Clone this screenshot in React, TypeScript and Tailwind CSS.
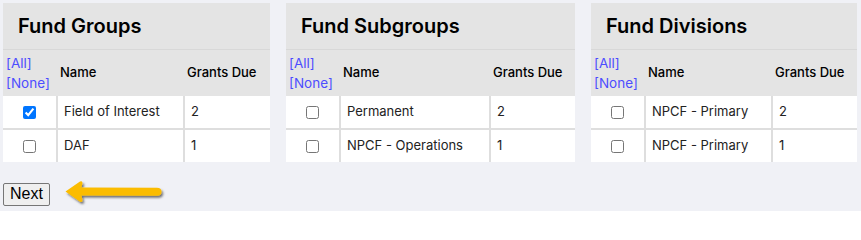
import React from 'react';

type Row = { name: string; due: number; checked?: boolean };

const panels: { title: string; widths: [number, number, number]; rows: Row[] }[] = [
  {
    title: 'Fund Groups',
    widths: [54, 127, 86],
    rows: [
      { name: 'Field of Interest', due: 2, checked: true },
      { name: 'DAF', due: 1 },
    ],
  },
  {
    title: 'Fund Subgroups',
    widths: [54, 150, 85],
    rows: [
      { name: 'Permanent', due: 2 },
      { name: 'NPCF - Operations', due: 1 },
    ],
  },
  {
    title: 'Fund Divisions',
    widths: [54, 127, 85],
    rows: [
      { name: 'NPCF - Primary', due: 2 },
      { name: 'NPCF - Primary', due: 1 },
    ],
  },
];

const Panel = ({ title, widths, rows }: (typeof panels)[number]) => (
  <div className="bg-white" style={{ width: widths[0] + widths[1] + widths[2] }}>
    <div className="h-[46px] bg-[#e4e4e4] pl-[15px] flex items-center">
      <h2 className="text-[20px] font-semibold text-black">{title}</h2>
    </div>
    <table className="w-full border-collapse table-fixed text-[13px] text-[#222]">
      <colgroup>
        {widths.map((w, i) => (
          <col key={i} style={{ width: w }} />
        ))}
      </colgroup>
      <thead>
        <tr className="h-[46px] bg-[#e4e4e4] border-t border-[#d8d8d8]">
          <th className="text-left font-normal pl-[3px] leading-[20px] text-[#4d4dff] text-[13.5px]">
            <div>[All]</div>
            <div>[None]</div>
          </th>
          <th className="text-left font-medium text-black pl-[3px]">Name</th>
          <th className="text-left font-medium text-black pl-[3px]">Grants Due</th>
        </tr>
      </thead>
      <tbody>
        {rows.map((r, i) => (
          <tr key={i} className={`h-[33px] ${i > 0 ? 'border-t-2 border-[#dedede]' : ''}`}>
            <td className="text-center align-middle">
              <input type="checkbox" defaultChecked={r.checked} className="w-[13px] h-[13px] align-middle" />
            </td>
            <td className="border-l-2 border-[#dedede] pl-[6px]">{r.name}</td>
            <td className="border-l-2 border-[#dedede] pl-[6px]">{r.due}</td>
          </tr>
        ))}
      </tbody>
    </table>
  </div>
);

// yellow pointer arrow next to the button
const Arrow = () => (
  <svg width="104" height="28" viewBox="0 0 104 28" className="block -mt-[4px]">
    <defs>
      <filter id="sh" x="-10%" y="-30%" width="130%" height="180%">
        <feDropShadow dx="1.5" dy="2" stdDeviation="1.2" floodColor="#000" floodOpacity="0.55" />
      </filter>
    </defs>
    <path
      d="M1.5 12.5 L16 2.5 Q18.5 1.5 18.5 4 L17.5 8.5 L93 8.8 Q97.5 9 97.5 12.8 Q97.5 16.8 93 16.8 L17.5 16.6 L18.5 21 Q18.5 23.8 16 22.8 Z"
      fill="#fbbc05"
      filter="url(#sh)"
    />
  </svg>
);

export default function App() {
  return (
    <div
      className="h-[211px] overflow-hidden bg-[#f0f1f6] pt-[3px] pl-[3px]"
      style={{ fontFamily: 'Inter, "Noto Sans", sans-serif' }}
    >
      <div className="flex gap-4 items-start">
        {panels.map((p) => (
          <Panel key={p.title} {...p} />
        ))}
      </div>
      <div className="flex items-start gap-[14px] mt-[21px]">
        <button
          className="h-[23px] px-[6px] border border-[#767676] rounded-[2px] bg-[#efefef] text-[16px] leading-none text-black"
          style={{ fontFamily: '"Liberation Sans", Arial, sans-serif' }}
        >
          Next
        </button>
        <Arrow />
      </div>
    </div>
  );
}
